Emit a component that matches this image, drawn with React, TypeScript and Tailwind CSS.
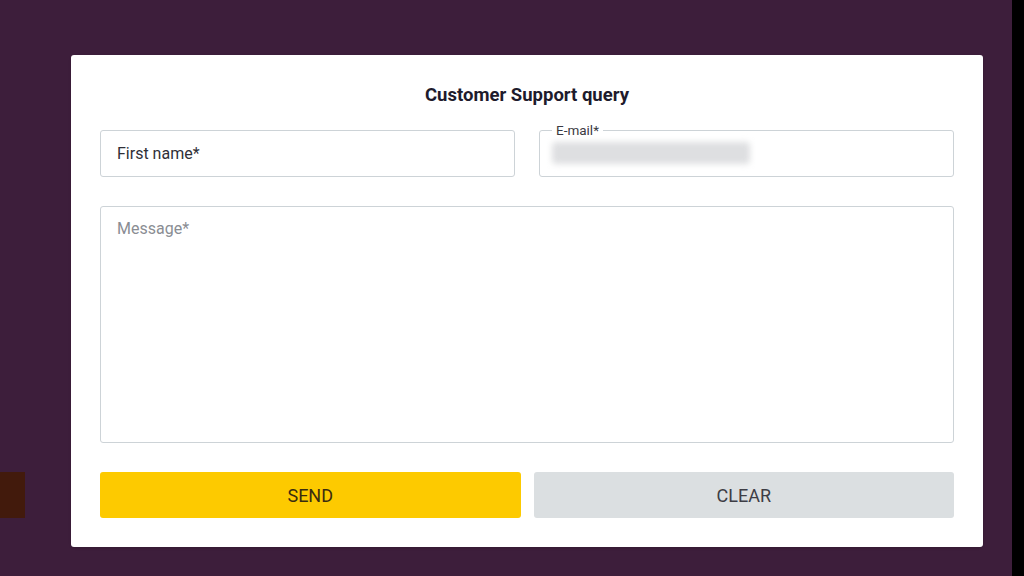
export default function App() {
  return (
    <div
      className="flex h-[576px] w-[1024px] overflow-hidden bg-[#3d1e3b]"
      style={{ fontFamily: "Roboto, 'Liberation Sans', sans-serif" }}
    >
      {/* left strip with a half-hidden button behind the modal */}
      <div className="flex w-[71px] shrink-0 flex-col">
        <div className="mt-[472px] h-[46px] w-[25px] bg-[#421a0c]" />
      </div>

      <div className="flex flex-1 flex-col pt-[55px]">
        <div className="flex h-[492px] w-[912px] flex-col rounded-[3px] bg-white px-[29px] pt-[29px] shadow-sm">
          <h2 className="pb-[24px] text-center text-[18.5px] font-bold leading-[22px] text-[#1e1b2c]">
            Customer Support query
          </h2>

          <div className="flex justify-between">
            <div className="flex h-[47px] w-[415px] items-center rounded-[3px] border border-[#cdd3d7] px-[16px] text-[16px] text-[#2f2f37]">
              First name*
            </div>
            <fieldset className="-mt-[7px] h-[54px] w-[415px] min-w-0 rounded-[3px] border border-[#cdd3d7] pl-[12px] pr-[16px]">
              <legend className="px-[4px] text-[13.5px] leading-[14px] text-[#3a3a42]">E-mail*</legend>
              <div className="mt-[5px] h-[22px] w-[198px] rounded-[4px] bg-[#dedfe1] blur-[3px]" />
            </fieldset>
          </div>

          <div className="mt-[29px] h-[237px] rounded-[3px] border border-[#cdd3d7] px-[16px] pt-[10px] text-[16px] text-[#8a8d93]">
            Message*
          </div>

          <div className="mt-[29px] flex gap-[13px]">
            <button className="h-[46px] flex-1 rounded-[3px] bg-[#fdca00] text-[18px] text-[#3a2c10]">
              SEND
            </button>
            <button className="h-[46px] flex-1 rounded-[3px] bg-[#dbdfe1] text-[18px] text-[#3d3d45]">
              CLEAR
            </button>
          </div>
        </div>
      </div>

      <div className="w-[12px] shrink-0 bg-black" />
    </div>
  );
}
